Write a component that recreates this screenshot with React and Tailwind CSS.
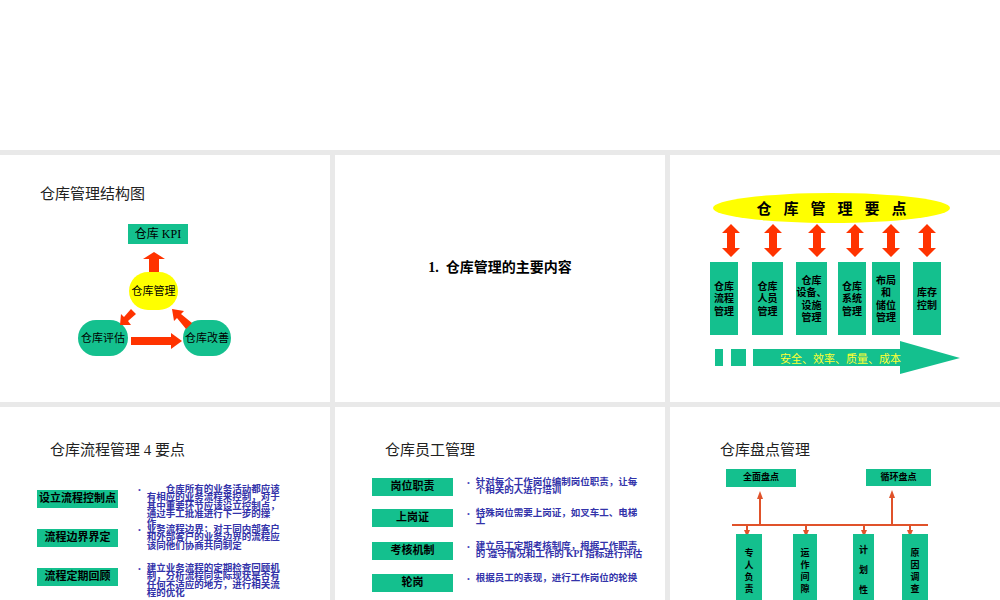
const G = "bg-[#14c08e]";
const F = { fontFamily: '"Liberation Serif","Noto Sans CJK SC",serif' };
const CJK = { fontFamily: '"Noto Sans CJK SC",sans-serif' };

function Slide({ children, className = "" }) {
  return <div className={"relative bg-white overflow-hidden " + className}>{children}</div>;
}

function VArrow({ x, y1, y2 }) {
  const h = y2 - y1;
  return (
    <svg className="absolute" style={{ left: x - 9, top: y1 }} width="18" height={h} viewBox={`0 0 18 ${h}`}>
      <polygon points={`9,0 18,9 13,9 13,${h - 9} 18,${h - 9} 9,${h} 0,${h - 9} 5,${h - 9} 5,9 0,9`} fill="#ff3300" />
    </svg>
  );
}

function Row({ k, v, h, w, boxTop = 0, ml = 20 }) {
  return (
    <div className="flex" style={{ height: h }}>
      <div className={`w-[81px] h-[18px] ${G} text-[11px] font-bold flex items-center justify-center shrink-0`} style={{ marginTop: boxTop }}>{k}</div>
      {v && <div className="text-[8px] text-[#4444bb] mr-[6px]" style={{ marginLeft: ml }}>•</div>}
      <div className="text-[9.5px] leading-[8.5px] text-[#3333aa] font-bold" style={{ width: w }}>{v}</div>
    </div>
  );
}

export default function App() {
  const b3 = [
    [40, 28, ["仓库", "流程", "管理"]],
    [82, 31, ["仓库", "人员", "管理"]],
    [126, 31, ["仓库", "设备、", "设施", "管理"]],
    [168, 28, ["仓库", "系统", "管理"]],
    [202, 28, ["布局", "和", "储位", "管理"]],
    [243, 28, ["库存", "控制"]],
  ];
  const ax = [61, 103, 147, 185, 221, 257];
  const rows4 = [
    ["设立流程控制点", "\u3000\u3000仓库所有的业务活动都应该有相应的业务流程来控制，对于其中重要环节应该设立控制点，通过手工批准进行下一步的操作。", 40, 5],
    ["流程边界界定", "业务流程边界：对于同内部客户和外部客户的业务边界的流程应该同他们协商共同制定", 39, 4],
    ["流程定期回顾", "建立业务流程的定期检查回顾机制，分析流程同实际现状是否有任何不适应的地方，进行相关流程的优化", 41, 4],
    ["制度化", "所有仓库相关的人员必须进行相关培训", 40, 4],
  ];
  const rows5 = [
    ["岗位职责", "针对每个工作岗位编制岗位职责，让每个相关的人进行培训", 31],
    ["上岗证", "特殊岗位需要上岗证，如叉车工、电梯工", 33],
    ["考核机制", "建立员工定期考核制度，根据工作职责的  遵守情况和工作的 KPI 指标进行评估", 32],
    ["轮岗", "根据员工的表现，进行工作岗位的轮换", 29],
    ["培训体系", "", 30],
  ];
  return (
    <div className="w-[1000px] h-[600px] bg-[#e9e9e9] overflow-hidden" style={F}>
      <div className="h-[150px] bg-white" />
      <div className="grid grid-cols-[330px_330px_330px] grid-rows-[247px_200px] gap-[5px] mt-[5px]">
        <Slide>
          <div className="absolute left-[40px] top-[28px] text-[15px] text-[#222]">仓库管理结构图</div>
          <div className={`absolute left-[128px] top-[69px] w-[60px] h-[20px] ${G} text-[12px] flex items-center justify-center`}>仓库 KPI</div>
          <svg className="absolute left-[143px] top-[97px]" width="22" height="20">
            <polygon points="11,0 22,7 16,7 16,20 6,20 6,7 0,7" fill="#ff3300" />
          </svg>
          <div className="absolute left-[129px] top-[117px] w-[49px] h-[38px] rounded-full bg-[#ffff00] text-[11px] flex items-center justify-center">仓库管理</div>
          <div className={`absolute left-[78px] top-[165px] w-[50px] h-[36px] rounded-full ${G} text-[11px] flex items-center justify-center`}>仓库评估</div>
          <div className={`absolute left-[183px] top-[165px] w-[48px] h-[36px] rounded-full ${G} text-[11px] flex items-center justify-center`}>仓库改善</div>
          <svg className="absolute left-0 top-0" width="330" height="247">
            <polygon points="131,154 136,159 128,166 131,170 120,170 121,159 124,162" fill="#ff3300" />
            <polygon points="192,168 186,174 177,163 174,166 172,154 184,156 181,159" fill="#ff3300" />
            <polygon points="131,182 171,182 171,178 182,186 171,194 171,190 131,190" fill="#ff3300" />
          </svg>
        </Slide>
        <Slide className="flex items-center justify-center">
          <div className="text-[14px] font-bold text-black mt-[-22px]">1.&nbsp; 仓库管理的主要内容</div>
        </Slide>
        <Slide>
          <div className="absolute left-[43px] top-[38px] w-[237px] h-[30px] rounded-[50%] bg-[#ffff00] flex items-center justify-center text-[15px] font-bold tracking-[12px] pl-[12px]" style={CJK}>仓库管理要点</div>
          {ax.map((x) => (
            <VArrow key={x} x={x} y1={69} y2={102} />
          ))}
          {b3.map(([l, w, t]) => (
            <div key={l} className={`absolute top-[107px] h-[73px] ${G} flex flex-col items-center justify-center text-[10px] leading-[12.5px] font-bold whitespace-nowrap`} style={{ left: l, width: w, ...CJK }}>
              {t.map((s) => <span key={s}>{s}</span>)}
            </div>
          ))}
          <div className={`absolute left-[45px] top-[194px] w-[8px] h-[17px] ${G}`} />
          <div className={`absolute left-[61px] top-[194px] w-[15px] h-[17px] ${G}`} />
          <svg className="absolute left-[83px] top-[186px]" width="208" height="34">
            <polygon points="0,8 147,8 147,0 207,17 147,33 147,25 0,25" fill="#14c08e" />
          </svg>
          <div className="absolute left-[110px] top-[195px] text-[11px] text-[#ffff33]" style={CJK}>安全、效率、质量、成本</div>
        </Slide>

        <Slide className="pl-[37px] pt-[32px]">
          <div className="text-[15px] text-[#222] ml-[13px] mb-[23px]">仓库流程管理 4 要点</div>
          {rows4.map(([k, v, h, t]) => (
            <Row key={k} k={k} v={v} h={h} w={140} boxTop={t} ml={20} />
          ))}
        </Slide>
        <Slide className="pl-[37px] pt-[32px]">
          <div className="text-[15px] text-[#222] ml-[13px] mb-[16px]">仓库员工管理</div>
          {rows5.map(([k, v, h]) => (
            <Row key={k} k={k} v={v} h={h} w={170} ml={14} />
          ))}
        </Slide>
        <Slide>
          <div className="absolute left-[50px] top-[32px] text-[15px] text-[#222]">仓库盘点管理</div>
          <div className={`absolute left-[56px] top-[62px] w-[70px] h-[18px] ${G} text-[9px] font-bold flex items-center justify-center`}>全面盘点</div>
          <div className={`absolute left-[196px] top-[62px] w-[65px] h-[17px] ${G} text-[9px] font-bold flex items-center justify-center`}>循环盘点</div>
          <svg className="absolute left-0 top-0" width="330" height="200">
            <g stroke="#e0522a" strokeWidth="2" fill="#e0522a">
              <line x1="62" y1="118" x2="258" y2="118" />
              <line x1="90" y1="118" x2="90" y2="90" />
              <line x1="222" y1="118" x2="222" y2="89" />
              <polygon points="90,84 87,92 93,92" strokeWidth="0" />
              <polygon points="222,83 219,91 225,91" strokeWidth="0" />
              {[77, 136, 194, 240].map((x) => (
                <g key={x}>
                  <line x1={x} y1="118" x2={x} y2="124" />
                  <polygon points={`${x},130 ${x - 3},123 ${x + 3},123`} strokeWidth="0" />
                </g>
              ))}
            </g>
          </svg>
          {[
            [66, 26, ["专", "人", "负", "责"], 12],
            [123, 24, ["运", "作", "间", "隙"], 12],
            [183, 21, ["计", "划", "性"], 20],
            [232, 26, ["原", "因", "调", "查"], 12],
          ].map(([l, w, t, lh]) => (
            <div key={l} className={`absolute top-[127px] h-[80px] ${G} flex flex-col items-center text-[9px] font-bold`} style={{ left: l, width: w, lineHeight: lh + "px", paddingTop: lh === 20 ? 6 : 13, ...CJK }}>
              {t.map((s) => <span key={s}>{s}</span>)}
            </div>
          ))}
        </Slide>
      </div>
    </div>
  );
}
